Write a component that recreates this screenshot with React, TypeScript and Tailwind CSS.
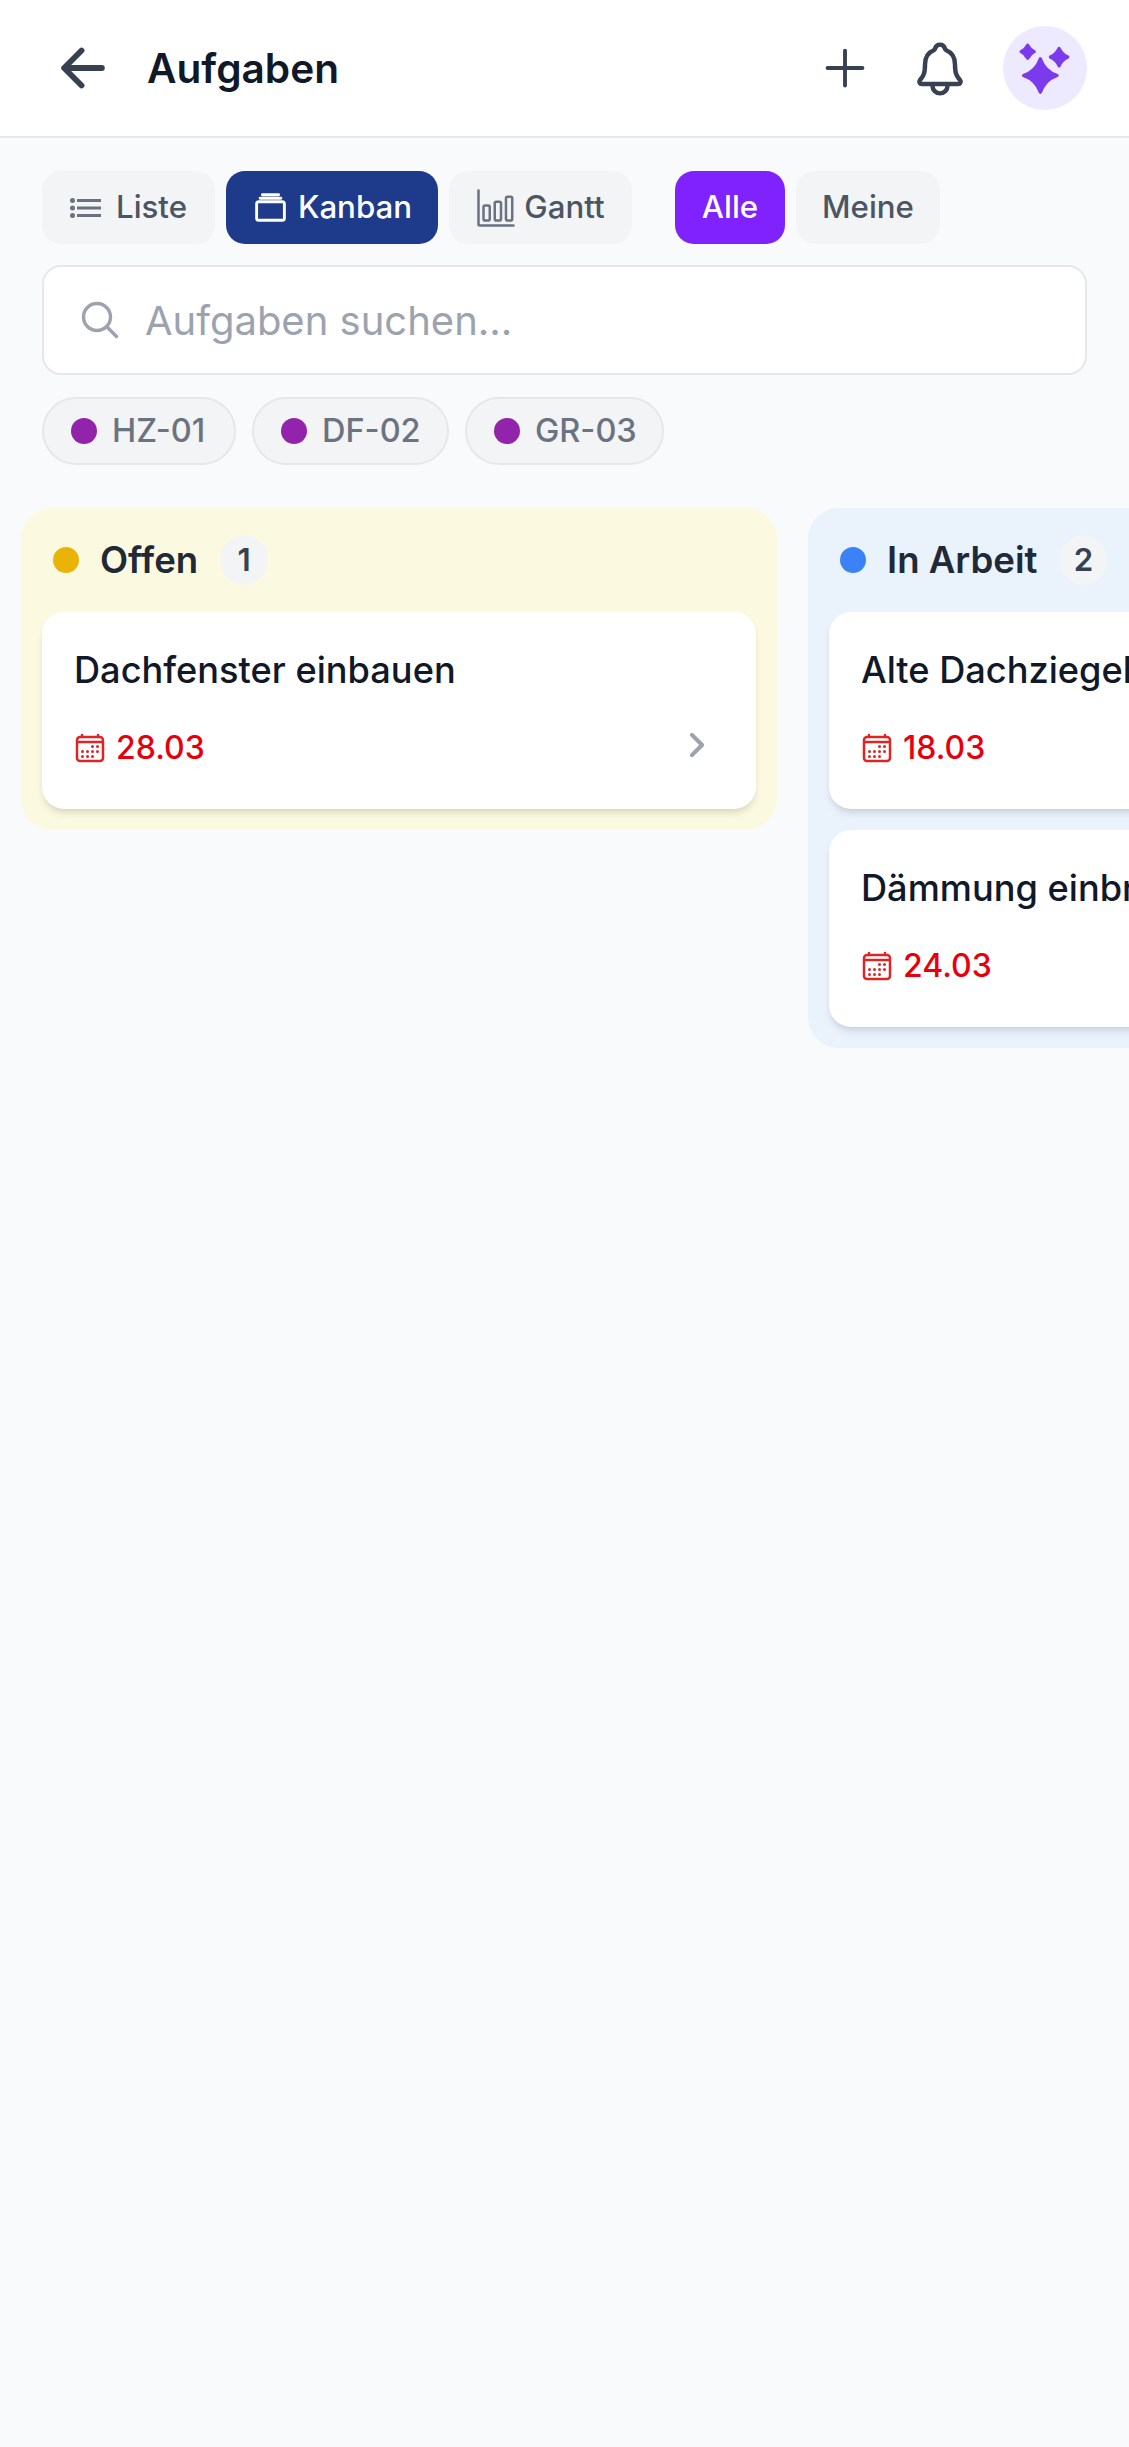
import React from "react";
import {
  IoArrowBack,
  IoAdd,
  IoNotificationsOutline,
  IoAlbumsOutline,
  IoBarChartOutline,
  IoSearchOutline,
  IoCalendarOutline,
  IoChevronForward,
} from "react-icons/io5";

function Tab({ children, cls }: { children: React.ReactNode; cls: string }) {
  return (
    <div className={`flex h-[73px] items-center justify-center rounded-[19px] text-[31.25px] font-medium ${cls}`}>
      {children}
    </div>
  );
}

function ListGlyph() {
  return (
    <svg width="31" height="20" viewBox="0 0 31 20" className="mr-[15px] text-[#6b7280]" fill="none" stroke="currentColor">
      <path d="M7 2.5H31M7 10H31M7 17.5H31" strokeWidth="3" />
      <circle cx="2.5" cy="2.5" r="2.5" fill="currentColor" stroke="none" />
      <circle cx="2.5" cy="10" r="2.5" fill="currentColor" stroke="none" />
      <circle cx="2.5" cy="17.5" r="2.5" fill="currentColor" stroke="none" />
    </svg>
  );
}

function SparkleGlyph() {
  return (
    <svg width="52" height="52" viewBox="0 0 48 48" className="mt-[2px] text-[#7c3aed]" fill="currentColor" stroke="currentColor" strokeWidth="3" strokeLinejoin="round">
      <path d="M19.7 14.5Q23.7 26 35.2 30Q23.7 34 19.7 45.5Q15.7 34 4.2 30Q15.7 26 19.7 14.5Z" />
      <path d="M8 2Q10 6 14 8Q10 10 8 14Q6 10 2 8Q6 6 8 2Z" />
      <path d="M37 5Q39.5 10.5 45 13Q39.5 15.5 37 21Q34.5 15.5 29 13Q34.5 10.5 37 5Z" />
    </svg>
  );
}

function Chip({ label, w }: { label: string; w: string }) {
  return (
    <div className={`flex h-[68px] items-center gap-[15px] rounded-full border-2 border-[#e5e7eb] bg-[#f3f4f6] pl-[27px] text-[32.5px] font-medium text-[#6b7280] ${w}`}>
      <span className="h-[26px] w-[26px] rounded-full bg-[#9124aa]" />
      {label}
    </div>
  );
}

function Card({ title, date, chevron }: { title: string; date: string; chevron?: boolean }) {
  return (
    <div className="flex h-[197px] w-[714px] flex-col rounded-[22px] bg-white px-[32px] pt-[36px] shadow-[0_6px_9px_-2px_rgba(0,0,0,0.1),0_3px_6px_-3px_rgba(0,0,0,0.1)]">
      <div className="whitespace-nowrap text-[36.2px] leading-[44px] font-medium text-[#111827]">{title}</div>
      <div className="mt-[38px] flex items-center justify-between">
        <div className="flex items-center gap-[10px] text-[32px] leading-[36px] font-medium text-[#e7000b]">
          <IoCalendarOutline size={32} className="text-[#dc2626] [&_path]:stroke-[40px] [&_rect]:stroke-[40px]" />
          {date}
        </div>
        {chevron && <IoChevronForward size={36} className="mr-[9px] mt-[-6px] text-[#9ca3af] [&_*]:stroke-[60px]" />}
      </div>
    </div>
  );
}

function Column({ title, count, bg, dot, children }: { title: string; count: number; bg: string; dot: string; children: React.ReactNode }) {
  return (
    <div className={`flex w-[756px] shrink-0 flex-col gap-[21px] self-start rounded-[31px] px-[21px] pb-[21px] pt-[26px] ${bg}`}>
      <div className="mb-[5px] flex h-[52px] items-center pl-[11px]">
        <span className={`mr-[21px] h-[26px] w-[26px] rounded-full ${dot}`} />
        <span className="text-[36.6px] font-semibold text-[#1f2937]">{title}</span>
        <span className="ml-[22px] flex h-[50px] w-[48px] items-center justify-center rounded-full bg-[#f3f4f6] text-[31.25px] font-semibold text-[#374151]">
          {count}
        </span>
      </div>
      {children}
    </div>
  );
}

export default function App() {
  return (
    <div className="h-[2447px] w-full overflow-hidden bg-[#f9fafb] font-['Inter',sans-serif]">
      <header className="flex h-[138px] items-center justify-between border-b-2 border-[#e5e7eb] bg-white pl-[52px] pr-[42px]">
        <div className="flex items-center gap-[33px]">
          <IoArrowBack size={62} className="text-[#374151]" />
          <h1 className="mt-[2px] text-[40.6px] font-semibold text-[#111827]">Aufgaben</h1>
        </div>
        <div className="flex items-center">
          <IoAdd size={62} className="text-[#374151]" />
          <IoNotificationsOutline size={60} className="ml-[34px] mt-[2px] text-[#374151] [&_*]:stroke-[38px]" />
          <div className="ml-[33px] flex h-[84px] w-[84px] items-center justify-center rounded-full bg-[#ede9fe]">
            <SparkleGlyph />
          </div>
        </div>
      </header>

      <div className="flex flex-col px-[42px] pt-[33px]">
        <div className="flex items-center">
          <div className="flex gap-[11px]">
            <Tab cls="w-[173px] bg-[#f3f4f6] text-[#4b5563]">
              <ListGlyph />
              Liste
            </Tab>
            <Tab cls="w-[212px] bg-[#1e3a8a] text-white">
              <IoAlbumsOutline size={37} className="mr-[9px] text-white [&_*]:stroke-[40px]" />
              Kanban
            </Tab>
            <Tab cls="w-[183px] bg-[#f3f4f6] text-[#4b5563]">
              <IoBarChartOutline size={40} className="mr-[8px] text-[#6b7280]" />
              Gantt
            </Tab>
          </div>
          <div className="ml-[43px] flex gap-[11px]">
            <Tab cls="w-[110px] bg-[#7f22fe] text-white">Alle</Tab>
            <Tab cls="w-[144px] bg-[#f3f4f6] text-[#4b5563]">Meine</Tab>
          </div>
        </div>

        <div className="mt-[21px] flex h-[110px] items-center gap-[23px] rounded-[19px] border-2 border-[#e5e7eb] bg-white pl-[34px]">
          <IoSearchOutline size={44} className="text-[#9ca3af] [&_*]:stroke-[40px]" />
          <span className="mt-[2px] text-[40px] text-[#9ca3af]">Aufgaben suchen...</span>
        </div>

        <div className="mt-[22px] flex gap-[16px]">
          <Chip label="HZ-01" w="w-[194px]" />
          <Chip label="DF-02" w="w-[197px]" />
          <Chip label="GR-03" w="w-[199px]" />
        </div>
      </div>

      <div className="mt-[43px] flex gap-[31px] pl-[21px]">
        <Column title="Offen" count={1} bg="bg-[#fbfae0]" dot="bg-[#eab308]">
          <Card title="Dachfenster einbauen" date="28.03" chevron />
        </Column>
        <Column title="In Arbeit" count={2} bg="bg-[#eaf2fb]" dot="bg-[#3b82f6]">
          <Card title="Alte Dachziegel entfernen" date="18.03" chevron />
          <Card title="Dämmung einbringen" date="24.03" chevron />
        </Column>
      </div>
    </div>
  );
}
